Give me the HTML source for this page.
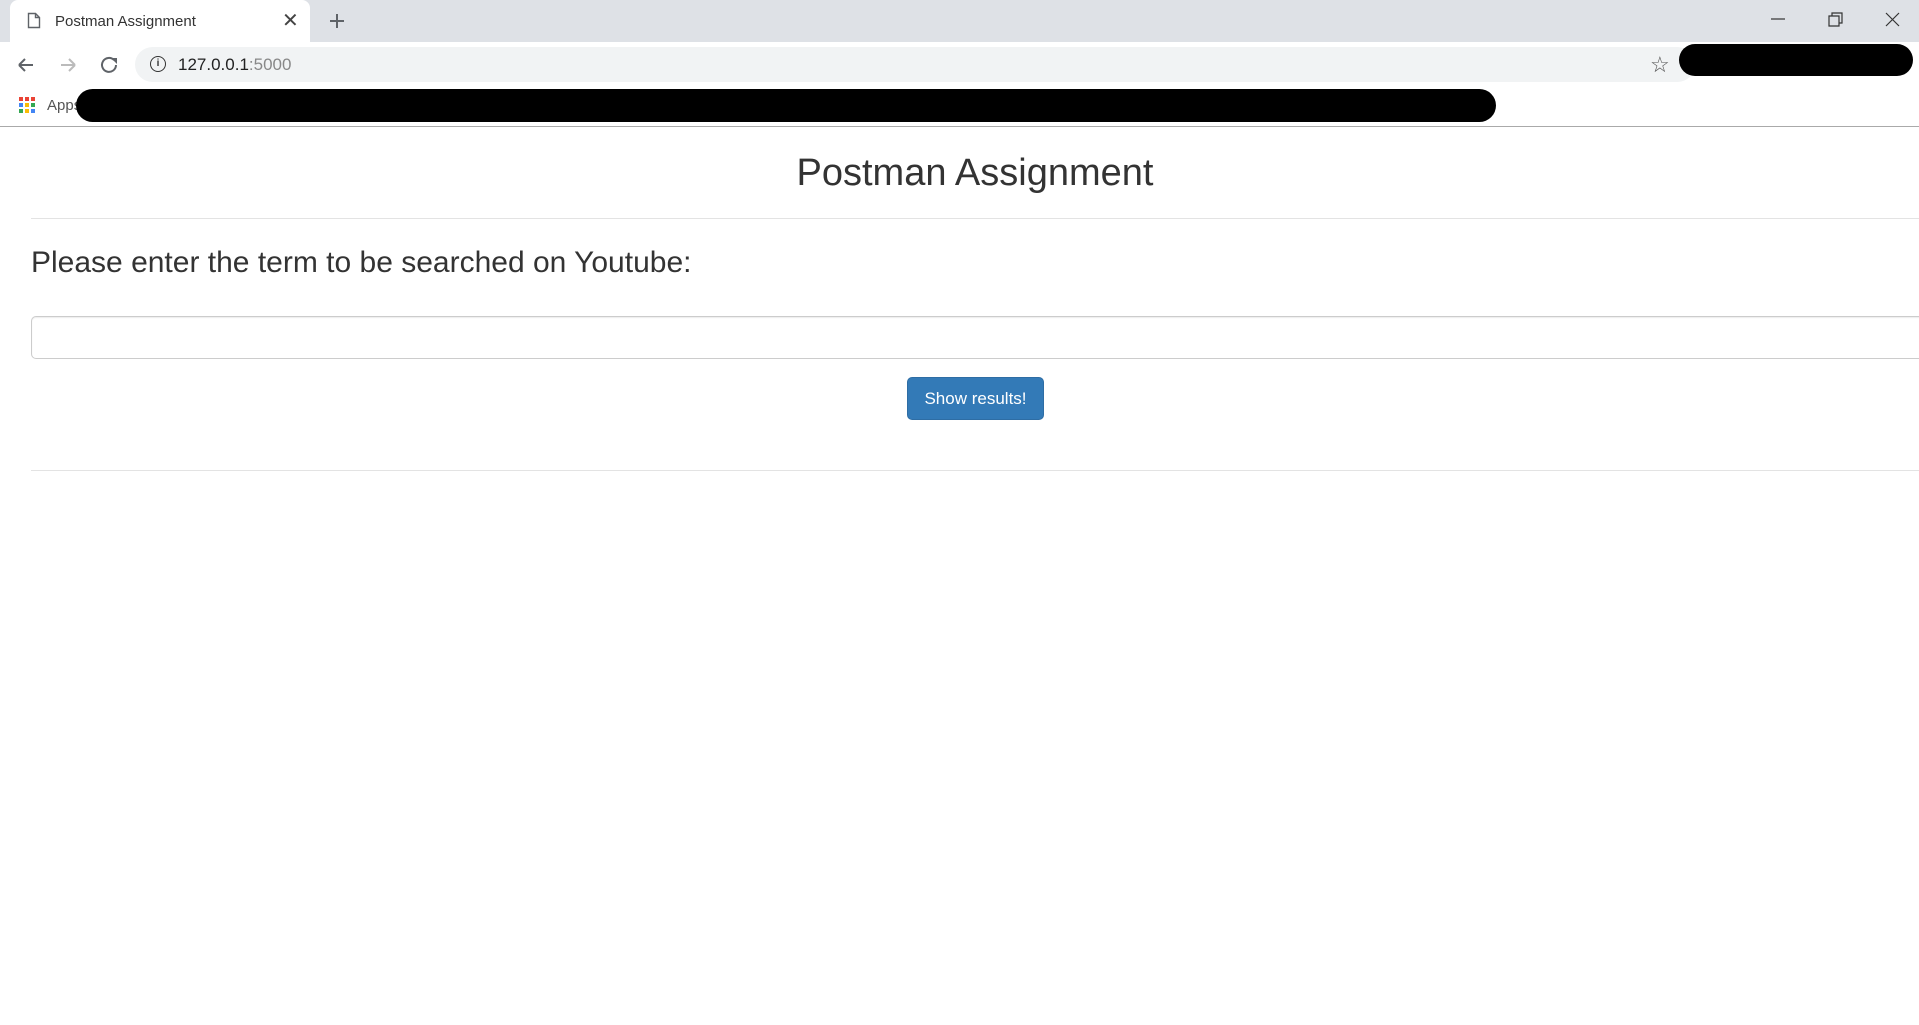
<!DOCTYPE html>
<html><head><meta charset="utf-8"><style>
*{margin:0;padding:0;box-sizing:border-box}
body{width:1919px;height:1025px;background:#fff;font-family:"Liberation Sans",Arial,sans-serif;position:relative;overflow:hidden;color:#333}
.abs{position:absolute}
</style></head><body>
<div class="abs" style="left:0;top:0;width:1919px;height:42px;background:#dee1e6"></div>
<div class="abs" style="left:10px;top:0;width:300px;height:42px;background:#fff;border-radius:8px 8px 0 0"></div>
<svg class="abs" style="left:27px;top:12px" width="14" height="17" viewBox="0 0 14 17"><path d="M1.5 1.5h7l4 4v10h-11z M8.5 1.5v4h4" fill="none" stroke="#5f6368" stroke-width="1.4"/></svg>
<div class="abs" style="left:55px;top:13px;font-size:15px;color:#333">Postman Assignment</div>
<div class="abs" style="left:282px;top:8px;font-size:20px;color:#444">✕</div>
<svg class="abs" style="left:329px;top:13px" width="16" height="16"><path d="M8 1v14M1 8h14" stroke="#5f6368" stroke-width="2"/></svg>
<svg class="abs" style="left:1770px;top:12px" width="140" height="16"><path d="M1 7h14" stroke="#333" stroke-width="1.2"/><path d="M59 4h10v10h-10z M62 4v-3h10v10h-3" fill="none" stroke="#333" stroke-width="1.2"/><path d="M116 1l13 13M129 1l-13 13" stroke="#333" stroke-width="1.2"/></svg>
<div class="abs" style="left:0;top:42px;width:1919px;height:84px;background:#fff"></div>
<svg class="abs" style="left:16px;top:56px" width="110" height="18"><path d="M3 9h14M3 9l6-6M3 9l6 6" stroke="#5f6368" stroke-width="2" fill="none"/><path d="M45 9h14M59 9l-6-6M59 9l-6 6" stroke="#bbb" stroke-width="2" fill="none"/><path d="M98 4a7 7 0 1 0 2 5" stroke="#5f6368" stroke-width="2" fill="none"/><path d="M95 2h6v6z" fill="#5f6368"/></svg>
<div class="abs" style="left:135px;top:47px;width:1560px;height:35px;background:#f1f3f4;border-radius:18px"></div>
<div class="abs" style="left:150px;top:56px;width:16px;height:16px;border:1.5px solid #333;border-radius:50%;font-size:10px;text-align:center;line-height:13px;font-weight:bold">i</div>
<div class="abs" style="left:178px;top:55px;font-size:17px;color:#222">127.0.0.1<span style="color:#888">:5000</span></div>
<div class="abs" style="left:1650px;top:52px;font-size:22px;color:#555">☆</div>
<div class="abs" style="left:1679px;top:44px;width:234px;height:32px;background:#000;border-radius:16px"></div>
<svg class="abs" style="left:19px;top:97px" width="17" height="17"><g><rect x="0" y="0" width="4" height="4" fill="#ea4335"/><rect x="6" y="0" width="4" height="4" fill="#ea4335"/><rect x="12" y="0" width="4" height="4" fill="#ea4335"/><rect x="0" y="6" width="4" height="4" fill="#4285f4"/><rect x="6" y="6" width="4" height="4" fill="#fbbc05"/><rect x="12" y="6" width="4" height="4" fill="#34a853"/><rect x="0" y="12" width="4" height="4" fill="#34a853"/><rect x="6" y="12" width="4" height="4" fill="#fbbc05"/><rect x="12" y="12" width="4" height="4" fill="#4285f4"/></g></svg>
<div class="abs" style="left:47px;top:97px;font-size:15px;color:#555">Apps</div>
<div class="abs" style="left:76px;top:89px;width:1420px;height:33px;background:#000;border-radius:17px"></div>
<div class="abs" style="left:0;top:126px;width:1919px;height:1px;background:#aaa"></div>
<div class="abs" style="left:0;top:152px;width:1950px;text-align:center;font-size:38px;color:#333">Postman Assignment</div>
<div class="abs" style="left:31px;top:218px;width:1900px;height:1px;background:#e3e3e3"></div>
<div class="abs" style="left:31px;top:246px;font-size:30px;color:#333">Please enter the term to be searched on Youtube:</div>
<div class="abs" style="left:31px;top:316px;width:1900px;height:43px;border:1px solid #ccc;border-radius:5px;box-shadow:inset 0 1px 1px rgba(0,0,0,.075)"></div>
<div class="abs" style="left:907px;top:377px;width:137px;height:43px;background:#337ab7;border:1px solid #2e6da4;border-radius:5px;color:#fff;font-size:17px;text-align:center;line-height:41px">Show results!</div>
<div class="abs" style="left:31px;top:470px;width:1900px;height:1px;background:#e3e3e3"></div>
</body></html>
